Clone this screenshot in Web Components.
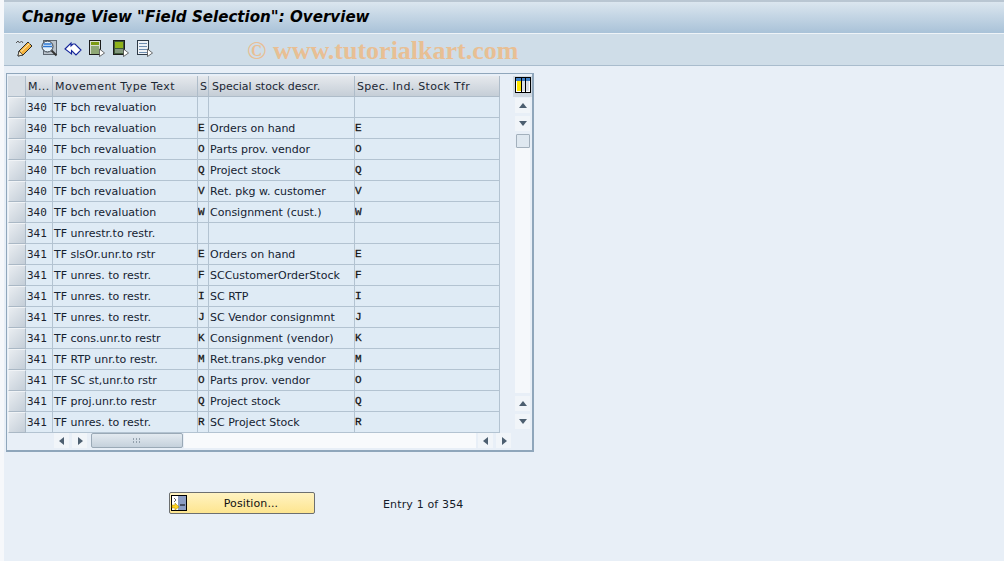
<!DOCTYPE html>
<html><head><meta charset="utf-8"><title>Field Selection</title>
<style>
html,body{margin:0;height:100%;overflow:hidden}
body{background:#e8eff7;font:11px "DejaVu Sans",sans-serif;color:#000}
</style></head><body>
<sap-screen>
<sap-title>Change View "Field Selection": Overview</sap-title>
<sap-toolbar></sap-toolbar>
<sap-table></sap-table>
<sap-footer></sap-footer>
</sap-screen>
<script>
const el=(n,html,css)=>customElements.define(n,class extends HTMLElement{
  constructor(){super();this.attachShadow({mode:'open'}).innerHTML='<style>'+css+'</style>'+html;}
});
el('sap-screen','<slot></slot>',`:host{display:flex;flex-direction:column;height:561px;padding-top:2px;box-sizing:border-box;background:#e8eff7;margin:0;border-left:4px solid #f6f8fb;box-shadow:inset 0 2px 0 #b9c6d2}`);
el('sap-title','<slot></slot>',`:host{display:flex;align-items:center;height:31px;flex:none;padding:0 0 1px 18px;box-sizing:border-box;background:linear-gradient(#dbe6ef,#a9c2d8);font:italic bold 15.1px "DejaVu Sans",sans-serif;color:#000}`);
el('sap-toolbar',`
<div class="icons">
<svg width="18" height="18" viewBox="0 0 18 18"><path d="M0 4l2-2 1.500 2 2-2 1.500 2" fill="none" stroke="#555" stroke-width="1"/><path d="M3 12L12 3l4 4-9 9-5 1z" fill="#f4b23c" stroke="#2b2b2b" stroke-width="1"/><path d="M5 12.500L13.500 4.500" stroke="#fff0c0"/><path d="M3 12l4 4-5 1z" fill="#f5e6c8" stroke="#2b2b2b" stroke-width=".7"/></svg>
<svg width="18" height="18" viewBox="0 0 18 18"><rect x="3.500" y="1.500" width="13" height="14" fill="#b9c2cb" stroke="#5c6670"/><circle cx="7.500" cy="7.500" r="5.500" fill="#e4f1fb" stroke="#2d3640"/><path d="M3.500 5h8M3 7.500h9" stroke="#2a76d2" stroke-width="1.600"/><path d="M11.500 11.500l5 5" stroke="#333" stroke-width="2"/></svg>
<svg width="18" height="18" viewBox="0 0 18 18"><path d="M1 10l6-6v3l2-2h2l6 6-5 5-4.500-4.500V15z" fill="#fff" stroke="#14249a" stroke-width="1.100"/></svg>
<svg width="18" height="18" viewBox="0 0 18 18"><rect x="1.500" y="1.500" width="11" height="14" fill="#d9dfd0" stroke="#1c1c1c"/><rect x="3" y="3" width="8" height="3" fill="#7d9b12"/><path d="M3 8h8M3 10h8M3 12h8M3 14h8" stroke="#44701a"/><path d="M11.500 10l5 4-5 3.500z" fill="#fff" stroke="#333" stroke-width=".7"/></svg>
<svg width="18" height="18" viewBox="0 0 18 18"><rect x="1.500" y="1.500" width="11" height="14" fill="#3f5a38" stroke="#1c1c1c"/><rect x="3" y="3" width="8" height="6" fill="#8fb21a"/><path d="M3 11h8M3 13h8" stroke="#c6d4c0"/><path d="M11.500 10l5 4-5 3.500z" fill="#fff" stroke="#333" stroke-width=".7"/></svg>
<svg width="18" height="18" viewBox="0 0 18 18"><rect x="1.500" y="1.500" width="11" height="14" fill="#eef2f6" stroke="#2e3a46"/><path d="M3 4.500h8M3 7.500h8M3 10.500h8M3 13.500h8" stroke="#6f8eb0" stroke-width="1.200"/><path d="M11.500 10l5 4-5 3.500z" fill="#fff" stroke="#333" stroke-width=".7"/></svg>
</div><span class="wm">© www.tutorialkart.com</span>`,
`:host{display:flex;position:relative;align-items:center;height:33px;flex:none;box-sizing:border-box;background:#cfdde8;border-top:1px solid #eef3f7;border-bottom:1px solid #a9bccd;padding:0 0 3px 12px}
.icons{display:flex;gap:6px;align-items:center}svg{display:block}
.wm{position:absolute;left:243px;top:2px;font:bold 26px "Liberation Serif",serif;color:#e8bf94;white-space:nowrap}`);
const arrow=d=>{const p={u:'M2 8L6 3l4 5z',d:'M2 3l4 5 4-5z',l:'M8 2L3 6l5 4z',r:'M4 2l5 4-5 4z'}[d];return `<span class="ab"><svg width="12" height="12" viewBox="0 0 12 12"><path d="${p}" fill="#4d5f70"/></svg></span>`};
const rows=[["340","TF bch revaluation","",""],["340","TF bch revaluation","E","Orders on hand"],["340","TF bch revaluation","O","Parts prov. vendor"],["340","TF bch revaluation","Q","Project stock"],["340","TF bch revaluation","V","Ret. pkg w. customer"],["340","TF bch revaluation","W","Consignment (cust.)"],["341","TF unrestr.to restr.","",""],["341","TF slsOr.unr.to rstr","E","Orders on hand"],["341","TF unres. to restr.","F","SCCustomerOrderStock"],["341","TF unres. to restr.","I","SC RTP"],["341","TF unres. to restr.","J","SC Vendor consignmnt"],["341","TF cons.unr.to restr","K","Consignment (vendor)"],["341","TF RTP unr.to restr.","M","Ret.trans.pkg vendor"],["341","TF SC st,unr.to rstr","O","Parts prov. vendor"],["341","TF proj.unr.to restr","Q","Project stock"],["341","TF unres. to restr.","R","SC Project Stock"]];
const cols='18px 27px 145px 11px 146px 145px';
el('sap-table',`
<div class="main">
 <div class="grid">
  <div class="hd corner"></div><div class="hd">M...</div><div class="hd">Movement Type Text</div><div class="hd">S</div><div class="hd sp">Special stock descr.</div><div class="hd st">Spec. Ind. Stock Tfr</div>
  ${rows.map(r=>`<div class="sel"></div><div class="c m n">${r[0]}</div><div class="c">${r[1]}</div><div class="c m l">${r[2]}</div><div class="c">${r[3]}</div><div class="c m l e">${r[2]}</div>`).join('')}
 </div>
 <div class="side">
  <span class="cfg"><svg width="16" height="16" viewBox="0 0 16 16"><rect x=".5" y=".5" width="15" height="15" fill="#fff" stroke="#000"/><rect x="1" y="1" width="14" height="3" fill="#3f7fc4"/><rect x="2" y="4" width="4" height="10" fill="#ffe600"/><rect x="7" y="4" width="3" height="10" fill="#d9dfe6"/><rect x="11" y="4" width="3" height="10" fill="#d9dfe6"/><path d="M6.500 1v14M10.500 1v14" stroke="#000"/></svg></span>
  <div class="vbar">${arrow('u')}${arrow('d')}<span class="thumb"></span><span class="track"></span>${arrow('u')}${arrow('d')}</div>
 </div>
</div>
<div class="hbar">
 ${arrow('l')}${arrow('r')}
 <span class="hthumb"><svg width="10" height="6" viewBox="0 0 10 6"><path d="M1 1h1M4 1h1M7 1h1M1 4h1M4 4h1M7 4h1" stroke="#7d8c99" stroke-width="1.400"/></svg></span>
 <span class="htrack"></span>${arrow('l')}${arrow('r')}
</div>`,
`:host{display:block;flex:none;width:528px;height:379px;margin:7px 0 0 2px;box-sizing:border-box;border:1px solid #8fa6bb;border-bottom-width:2px;border-right-width:2px;background:#e8eff7;padding:2px 0 0 1px}
.main{display:flex}
.grid{display:grid;grid-template-columns:${cols};grid-auto-rows:21px;grid-template-rows:21px;width:492px;align-self:flex-start}
.hd{background:linear-gradient(#e6e9ed,#c5ced7);border-right:1px solid #aebcc9;border-bottom:1px solid #aebcc9;box-sizing:border-box;padding:0 0 0 2px;line-height:22px;letter-spacing:.4px;white-space:nowrap;overflow:hidden;color:#1b2733}
.sp{padding-left:3px;letter-spacing:0}
.st{letter-spacing:.3px}
.corner{background:#d7dee5;padding:0}
.sel{background:linear-gradient(135deg,#e9edf1,#c4ced8);border:1px solid #aab8c5;border-top-color:#f0f3f6;border-left-color:#f0f3f6;box-sizing:border-box}
.c{background:#dfebf5;border-right:1px solid #b3c3d1;border-bottom:1px solid #b3c3d1;box-sizing:border-box;padding-left:1px;line-height:22px;white-space:nowrap;overflow:hidden;color:#142231}
.m{line-height:21px;color:#1b1f2e}
.n{font-family:"DejaVu Sans Mono",monospace;padding-left:1px}
.l{font-family:"Liberation Mono",monospace;padding-left:0;color:#000;-webkit-text-stroke:.3px #333}
.e{padding-left:0}
.side{margin-left:13px;width:19px;display:flex;flex-direction:column}
.cfg{display:flex;width:19px;height:21px;align-items:flex-start;justify-content:center;background:#cfd8e1;padding-top:1px;box-sizing:border-box}
.vbar{display:flex;flex-direction:column;gap:3px;margin:1px 0 0 2px;width:15px}
.ab{display:flex;width:15px;height:15px;background:#f1f5f9;align-items:center;justify-content:center;flex:none}
.thumb{width:14px;height:14px;margin-left:1px;background:#dfe8f0;border:1px solid #a3b0bc;box-sizing:border-box;border-radius:1px;flex:none}
.track{width:15px;height:245px;background:#f5f8fb;margin-top:-3px;flex:none}
.hbar{display:flex;align-items:center;gap:3px;margin:0 0 0 46px;height:15px}
.hthumb{display:flex;width:92px;height:15px;box-sizing:border-box;border:1px solid #9aa9b6;border-radius:2px;background:linear-gradient(#e3eaf0,#c5d1dc);align-items:center;justify-content:center;margin-left:1px;flex:none}
.htrack{width:292px;height:15px;background:#f8fafc;margin:0 -1px 0 -2px;flex:none}`);
el('sap-footer',`<button><svg width="16" height="16" viewBox="0 0 16 16"><rect x=".5" y=".5" width="15" height="15" fill="#fff" stroke="#000"/><rect x="7" y="1" width="8" height="14" fill="#8b9dc3"/><path d="M9 10h5" stroke="#000"/><path d="M3 3l2 2-2 2" fill="none" stroke="#666"/><path d="M1 10h3V8l4 4-4 3v-2H1z" fill="#ffd21f" stroke="#a58a00" stroke-width=".5"/></svg><span>Position...</span></button><span class="entry">Entry 1 of 354</span>`,
`:host{display:flex;align-items:center;margin:40px 0 0 165px;height:22px}
button{display:flex;align-items:center;width:146px;height:22px;padding:0 0 0 1px;box-sizing:border-box;border:1px solid #6c6f70;border-radius:2px;background:linear-gradient(#fff3c2,#fde58f);font:inherit;letter-spacing:.1px;color:#000}
button span{flex:1;text-align:center;padding:1px 0 0 1px;color:#111}
.entry{margin-left:68px;padding-top:2px;letter-spacing:.15px;color:#141a2a}`);
</script></body></html>
